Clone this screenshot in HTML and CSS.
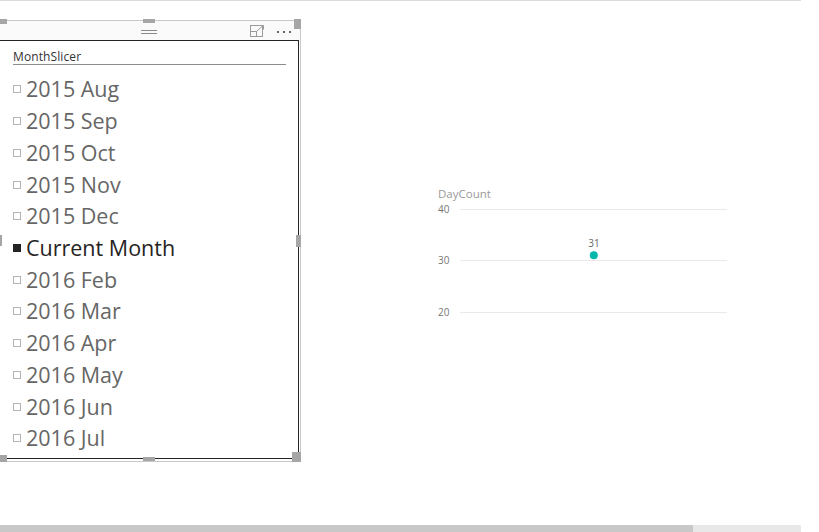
FILE: index.html
```html
<!DOCTYPE html>
<html>
<head>
<meta charset="utf-8">
<link rel="stylesheet" href="styles.css">
</head>
<body>
<div class="page">
  <div class="topline"></div>
  <div class="canvas">
    <section class="slicer">
      <div class="slicer-head">
        <span class="grip"></span>
        <div class="head-icons">
          <svg class="expand" width="15" height="12" viewBox="0 0 15 12">
            <rect x="0.5" y="0.5" width="12" height="11" fill="none" stroke="#9a9a9a"/>
            <rect x="0.5" y="6.5" width="6" height="5" fill="none" stroke="#9a9a9a"/>
            <path d="M6.5 6.5 L13 0.5 M9 0.5 H13.5 V4.5" fill="none" stroke="#9a9a9a"/>
          </svg>
          <span class="dots"><i></i><i></i><i></i></span>
        </div>
      </div>
      <div class="slicer-body">
        <div class="slicer-title">MonthSlicer</div>
        <ul class="items">
          <li class="item"><span class="box"></span><span class="label">2015 Aug</span></li>
          <li class="item"><span class="box"></span><span class="label">2015 Sep</span></li>
          <li class="item"><span class="box"></span><span class="label">2015 Oct</span></li>
          <li class="item"><span class="box"></span><span class="label">2015 Nov</span></li>
          <li class="item"><span class="box"></span><span class="label">2015 Dec</span></li>
          <li class="item selected"><span class="box"></span><span class="label">Current Month</span></li>
          <li class="item"><span class="box"></span><span class="label">2016 Feb</span></li>
          <li class="item"><span class="box"></span><span class="label">2016 Mar</span></li>
          <li class="item"><span class="box"></span><span class="label">2016 Apr</span></li>
          <li class="item"><span class="box"></span><span class="label">2016 May</span></li>
          <li class="item"><span class="box"></span><span class="label">2016 Jun</span></li>
          <li class="item"><span class="box"></span><span class="label">2016 Jul</span></li>
        </ul>
      </div>
      <span class="handle h-tl"></span>
      <span class="handle h-tm"></span>
      <span class="handle h-tr"></span>
      <span class="handle h-ml"></span>
      <span class="handle h-mr"></span>
      <span class="handle h-bl"></span>
      <span class="handle h-bm"></span>
      <span class="handle h-br"></span>
    </section>
    <svg class="chart" width="310" height="150" viewBox="0 0 310 150">
      <text class="c-title" x="8" y="17.5">DayCount</text>
      <line class="grid" x1="30" y1="29.5" x2="297" y2="29.5"/>
      <line class="grid" x1="30" y1="80.5" x2="297" y2="80.5"/>
      <line class="grid" x1="30" y1="132.5" x2="297" y2="132.5"/>
      <text class="c-axis" x="8" y="33">40</text>
      <text class="c-axis" x="8" y="84">30</text>
      <text class="c-axis" x="8" y="135.5">20</text>
      <circle cx="163.8" cy="75.3" r="4" fill="#01b8aa"/>
      <text class="c-val" x="164" y="67" text-anchor="middle">31</text>
    </svg>
  </div>
  <div class="scrollbar">
    <div class="thumb"></div>
    <div class="track"></div>
  </div>
</div>
</body>
</html>
```

FILE: styles.css
```css
* { box-sizing: border-box; }
html, body { margin: 0; padding: 0; background: #fff; }
body { font-family: "Open Sans", "Noto Sans", sans-serif; }

.page {
  width: 819px;
  height: 532px;
  display: flex;
  flex-direction: column;
  overflow: hidden;
}

.topline {
  width: 801px;
  height: 1px;
  background: #dcdcdc;
  flex: none;
}

.canvas {
  flex: 1;
  display: flex;
  align-items: flex-start;
}

.slicer {
  position: relative;
  width: 301px;
  height: 442px;
  margin-top: 19px;
  border-top: 1px solid #c8c8c8;
  border-right: 1px solid #c8c8c8;
  border-bottom: 1px solid #c8c8c8;
  display: flex;
  flex-direction: column;
  flex: none;
}

.slicer-head {
  height: 19px;
  background: #fafafa;
  display: flex;
  align-items: center;
  flex: none;
}

.grip {
  margin-left: 141px;
  width: 16px;
  height: 4px;
  border-top: 1px solid #8a8a8a;
  border-bottom: 1px solid #8a8a8a;
  margin-top: 2px;
}

.head-icons {
  margin-left: auto;
  margin-right: 9px;
  display: flex;
  align-items: center;
  gap: 12px;
}

.expand { display: block; margin-top: 1px; }

.dots { display: flex; gap: 4px; margin-top: 2px; }
.dots i {
  display: block;
  width: 2px;
  height: 2px;
  background: #666;
}

.slicer-body {
  width: 299px;
  height: 419px;
  border-top: 1px solid #252423;
  border-right: 1px solid #252423;
  border-bottom: 1px solid #252423;
  padding: 7px 12px 0 13px;
  flex: none;
}

.slicer-title {
  font-size: 12px;
  line-height: 15px;
  padding-top: 1px;
  color: #333;
  border-bottom: 1px solid #8c8c8c;
  letter-spacing: 0.1px;
}

.items {
  list-style: none;
  margin: 8px 0 0;
  padding: 0;
}

.item {
  height: 31.73px;
  display: flex;
  align-items: center;
  font-size: 21.5px;
  color: #666;
}

.box {
  width: 8px;
  height: 8px;
  border: 1px solid #b4b4b4;
  margin-right: 5px;
  flex: none;
  margin-top: 1px;
}

.label { line-height: 31px; white-space: nowrap; }

.item.selected { color: #252423; }
.item.selected .box { background: #252423; border-color: #252423; }

.handle {
  position: absolute;
  background: #a6a6a6;
}
.h-tl { left: 0; top: -2px; width: 7px; height: 5px; }
.h-tm { left: 143px; top: -2px; width: 12px; height: 4px; }
.h-tr { left: 294px; top: -2px; width: 7px; height: 10px; }
.h-ml { left: 0; top: 214px; width: 2px; height: 11px; }
.h-mr { left: 296px; top: 214px; width: 5px; height: 12px; }
.h-bl { left: 0; top: 434px; width: 7px; height: 7px; }
.h-bm { left: 143px; top: 436px; width: 12px; height: 4px; }
.h-br { left: 292px; top: 431px; width: 9px; height: 10px; }

.chart {
  display: block;
  margin-left: 129px;
  margin-top: 179px;
  flex: none;
  font-family: "Open Sans", "Noto Sans", sans-serif;
}

.c-title { font-size: 11.5px; fill: #9a9a9a; }
.c-axis { font-size: 10px; fill: #777; }
.c-val { font-size: 10px; fill: #666; }
.grid { stroke: #e9e9e9; stroke-width: 1; }

.scrollbar {
  height: 7px;
  display: flex;
  flex: none;
}
.thumb { width: 693px; background: #c8c8c8; }
.track { width: 108px; background: #e8e8e8; }
```
